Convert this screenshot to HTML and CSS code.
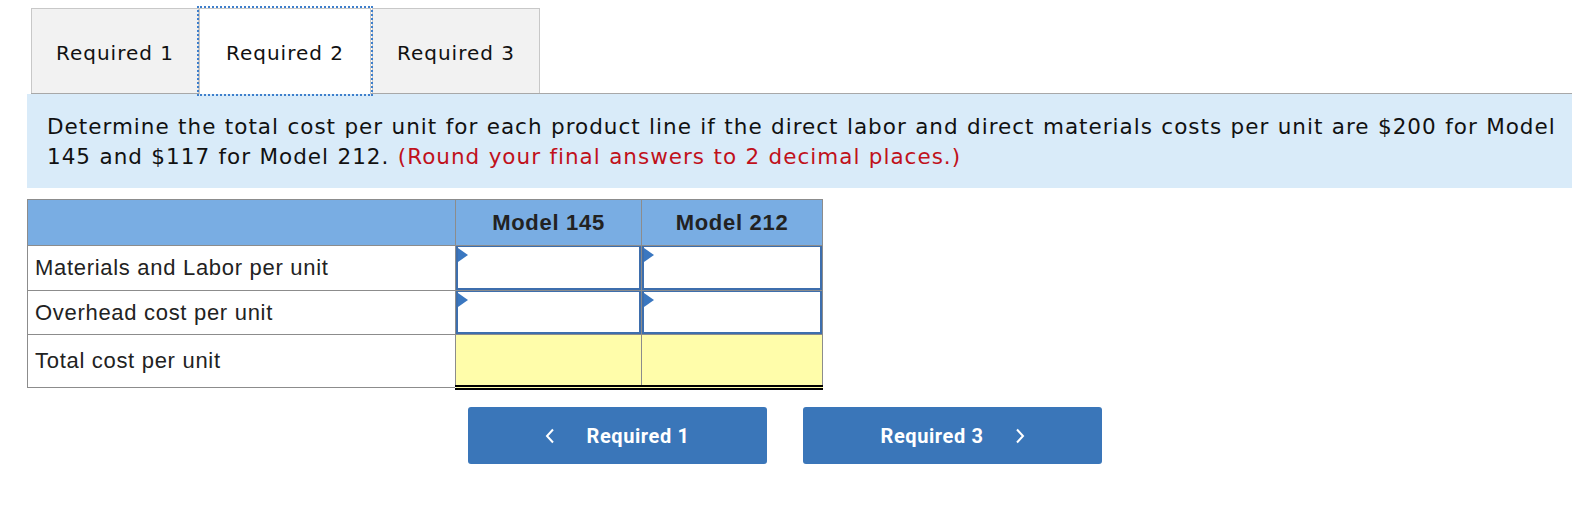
FILE: index.html
```html
<!DOCTYPE html>
<html>
<head>
<meta charset="utf-8">
<link rel="stylesheet" href="styles.css">
</head>
<body>
<div class="page">
  <div class="tabs">
    <div class="tab">Required 1</div>
    <div class="tab tab-active">Required 2</div>
    <div class="tab tab-last">Required 3</div>
  </div>
  <div class="prompt">
    <p>Determine the total cost per unit for each product line if the direct labor and direct materials costs per unit are $200 for Model 145 and $117 for Model 212. <span class="note">(Round your final answers to 2 decimal places.)</span></p>
  </div>
  <table class="grid">
    <colgroup>
      <col class="c-label">
      <col class="c-val1">
      <col class="c-val2">
    </colgroup>
    <thead>
      <tr class="head">
        <th></th>
        <th>Model 145</th>
        <th>Model 212</th>
      </tr>
    </thead>
    <tbody>
      <tr class="r1">
        <td class="label">Materials and Labor per unit</td>
        <td class="input"><div class="box"><span class="flag"></span></div></td>
        <td class="input"><div class="box"><span class="flag"></span></div></td>
      </tr>
      <tr class="r2">
        <td class="label">Overhead cost per unit</td>
        <td class="input"><div class="box"><span class="flag"></span></div></td>
        <td class="input"><div class="box"><span class="flag"></span></div></td>
      </tr>
      <tr class="r3">
        <td class="label">Total cost per unit</td>
        <td class="total"></td>
        <td class="total"></td>
      </tr>
    </tbody>
  </table>
  <div class="nav">
    <button class="btn"><svg class="chev" width="10" height="16" viewBox="0 0 10 16"><path d="M8 1.5 L2 8 L8 14.5" fill="none" stroke="#fff" stroke-width="2"/></svg><span>Required 1</span></button>
    <button class="btn"><span>Required 3</span><svg class="chev" width="10" height="16" viewBox="0 0 10 16"><path d="M2 1.5 L8 8 L2 14.5" fill="none" stroke="#fff" stroke-width="2"/></svg></button>
  </div>
</div>
</body>
</html>
```

FILE: styles.css
```css
html, body {
  margin: 0;
  padding: 0;
  background: #fff;
}

.page {
  width: 1572px;
  font-family: "DejaVu Sans", Verdana, sans-serif;
  color: #111;
}

.tabs {
  display: flex;
  margin-left: 31px;
  padding-top: 8px;
  border-bottom: 1px solid #a8a8a8;
  height: 85px;
}

.tab {
  box-sizing: border-box;
  width: 168px;
  height: 85px;
  background: #f2f2f2;
  border: 1px solid #c8c8c8;
  border-bottom: none;
  display: flex;
  align-items: center;
  justify-content: center;
  font-size: 20px;
  letter-spacing: 1px;
  color: #111;
  padding-top: 3px;
}

.tab-active {
  width: 172px;
  background: #fff;
  height: 86px;
  margin-bottom: -1px;
  outline: 2px dotted #3e7fcc;
  outline-offset: 0px;
  position: relative;
  z-index: 1;
}

.tab-last {
  margin-left: 1px;
}

.prompt {
  margin-left: 27px;
  background: #d9ebf9;
  padding: 18px 10px 16px 20px;
}

.prompt p {
  margin: 0;
  font-size: 21.5px;
  letter-spacing: 1px;
  word-spacing: 0.6px;
  line-height: 30px;
}

.note {
  color: #c0111b;
}

.grid {
  margin: 11px 0 0 27px;
  border-collapse: collapse;
  font-family: "Liberation Sans", Arial, sans-serif;
  color: #222;
  table-layout: fixed;
  width: 795px;
  line-height: 24px;
}

.c-label { width: 428px; }
.c-val1 { width: 186px; }
.c-val2 { width: 181px; }

.grid th,
.grid td {
  border: 1px solid #8c8c8c;
  padding: 0;
}

.head th {
  background: #79ade3;
  height: 45px;
  font-size: 22px;
  letter-spacing: 0.7px;
  font-weight: bold;
  text-align: center;
  color: #222;
}

.label {
  font-size: 22px;
  letter-spacing: 0.7px;
  padding-left: 7px !important;
  background: #fff;
}

.r1 td { height: 44px; }
.r2 td { height: 43px; }
.r3 td { height: 50px; }

.input {
  vertical-align: top;
  background: #fff;
}

.box {
  position: relative;
  box-sizing: border-box;
  height: 44px;
  border: 2px solid #3d6ead;
  border-top-width: 1px;
  background: #fff;
}

.r2 .box {
  height: 43px;
}

.flag {
  position: absolute;
  left: 0;
  top: 1px;
  width: 0;
  height: 0;
  border-top: 7px solid transparent;
  border-bottom: 7px solid transparent;
  border-left: 10px solid #3a77c0;
}

.r3 .total {
  background: #fffdaa;
  border-top: 1px solid #000;
  border-bottom: 5px double #000;
}

.nav {
  display: flex;
  justify-content: center;
  gap: 36px;
  margin-top: 17px;
  padding-right: 2px;
}

.btn {
  width: 299px;
  height: 57px;
  border: none;
  border-radius: 3px;
  background: #3a76b9;
  color: #fff;
  font-family: Roboto, "Liberation Sans", Arial, sans-serif;
  font-weight: bold;
  font-size: 20px;
  letter-spacing: 0.6px;
  display: flex;
  align-items: center;
  justify-content: center;
  gap: 31px;
  padding: 0;
}

.chev {
  display: block;
}
```
